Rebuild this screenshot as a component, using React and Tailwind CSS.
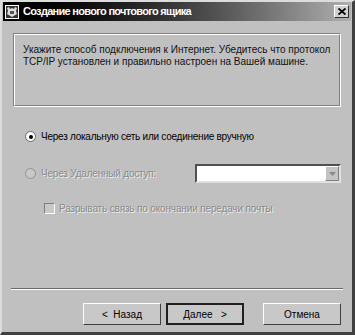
export default function App() {
  return (
    <div className="w-[355px] h-[335px] bg-[#c0c0c0] border-l-2 border-t-2 border-l-[#dcdcdc] border-t-[#dcdcdc] border-r-[3px] border-b-[3px] border-r-[#404040] border-b-[#404040] flex flex-col font-['Liberation_Sans',sans-serif] text-[10px] text-black overflow-hidden whitespace-nowrap">
      <div className="h-[19px] mx-[1px] bg-gradient-to-r from-[#000000] via-[#3a3a3a] to-[#b0b0b0] flex items-center pl-[2px] pr-[2px] shrink-0">
        <svg width="14" height="14" viewBox="0 0 14 14" className="shrink-0">
          <rect x="0" y="0" width="14" height="14" fill="#fff" />
          <rect x="1" y="1" width="12" height="12" fill="#333" />
          <path d="M2 3 L4 2 L5 4 L7 3 L9 4 L10 2 L12 3 L11 6 L12 9 L7 12 L2 9 L3 6 Z" fill="#ddd" />
          <rect x="5" y="6" width="4" height="3" fill="#555" />
        </svg>
        <span className="ml-[4px] text-white font-bold text-[11px] tracking-[-0.7px]">Создание нового почтового ящика</span>
        <div className="ml-auto w-[15px] h-[13px] bg-[#d0d0d0] border border-t-white border-l-white border-r-[#303030] border-b-[#303030] flex items-center justify-center">
          <svg width="8" height="7" viewBox="0 0 8 7">
            <path d="M0.5 0.5 L7.5 6.5 M7.5 0.5 L0.5 6.5" stroke="#000" strokeWidth="1.8" />
          </svg>
        </div>
      </div>

      <div className="flex-1 flex flex-col px-[11px] pt-[12px]">
        <div className="h-[74px] border border-t-[#808080] border-l-[#808080] border-r-white border-b-white">
          <div className="h-full border border-t-white border-l-white border-r-[#808080] border-b-[#808080] px-[8px] pt-[9px] leading-[12px] text-[10px] text-[#111]">
            <p>Укажите способ подключения к Интернет. Убедитесь что протокол</p>
            <p>TCP/IP установлен и правильно настроен на Вашей машине.</p>
          </div>
        </div>

        <div className="flex items-center mt-[22px] pl-[12px] tracking-[-0.25px]">
          <span className="w-[11px] h-[11px] rounded-full bg-white border border-[#6a6a6a] flex items-center justify-center">
            <span className="w-[4px] h-[4px] rounded-full bg-black" />
          </span>
          <span className="ml-[5px]">Через локальную сеть или соединение вручную</span>
        </div>

        <div className="flex items-center mt-[20px] pl-[12px] tracking-[-0.2px]">
          <span className="w-[11px] h-[11px] rounded-full bg-[#c8c8c8] border border-[#909090]" />
          <span className="ml-[5px] text-[#8a8a8a] [text-shadow:1px_1px_0_#ececec]">Через Удаленный доступ:</span>
          <div className="ml-auto w-[146px] h-[19px] bg-white border-2 border-t-[#505050] border-l-[#505050] border-r-[#e0e0e0] border-b-[#e0e0e0] flex justify-end items-stretch">
            <div className="w-[14px] bg-[#c4c4c4] border border-t-white border-l-white border-r-[#808080] border-b-[#808080] flex items-center justify-center">
              <svg width="7" height="4" viewBox="0 0 7 4">
                <path d="M0 0 L7 0 L3.5 4 Z" fill="#8a8a8a" />
              </svg>
            </div>
          </div>
        </div>

        <div className="flex items-center mt-[18px] pl-[31px] tracking-[-0.15px]">
          <span className="w-[11px] h-[11px] bg-[#c8c8c8] border border-t-[#808080] border-l-[#808080] border-r-white border-b-white" />
          <span className="ml-[4px] text-[#8a8a8a] [text-shadow:1px_1px_0_#ececec]">Разрывать связь по окончании передачи почты</span>
        </div>

        <div className="mt-auto" />
        <div className="h-[2px] border-t border-t-[#6a6a6a] border-b border-b-white -mx-[2px]" />

        <div className="flex justify-end items-center pt-[13px] pb-[7px] pr-[0px]">
          <button className="w-[78px] h-[22px] bg-[#c8c8c8] border border-t-white border-l-white border-r-[#404040] border-b-[#404040] text-[10px]">
            &lt;&nbsp; Назад
          </button>
          <button className="ml-[5px] w-[78px] h-[22px] bg-[#c8c8c8] border-2 border-t-[#202020] border-l-[#202020] border-r-[#202020] border-b-[#202020] text-[10px]">
            Далее&nbsp;&nbsp; &gt;
          </button>
          <button className="ml-[19px] w-[78px] h-[22px] bg-[#c8c8c8] border border-t-white border-l-white border-r-[#404040] border-b-[#404040] text-[10px]">
            Отмена
          </button>
        </div>
      </div>
    </div>
  );
}
